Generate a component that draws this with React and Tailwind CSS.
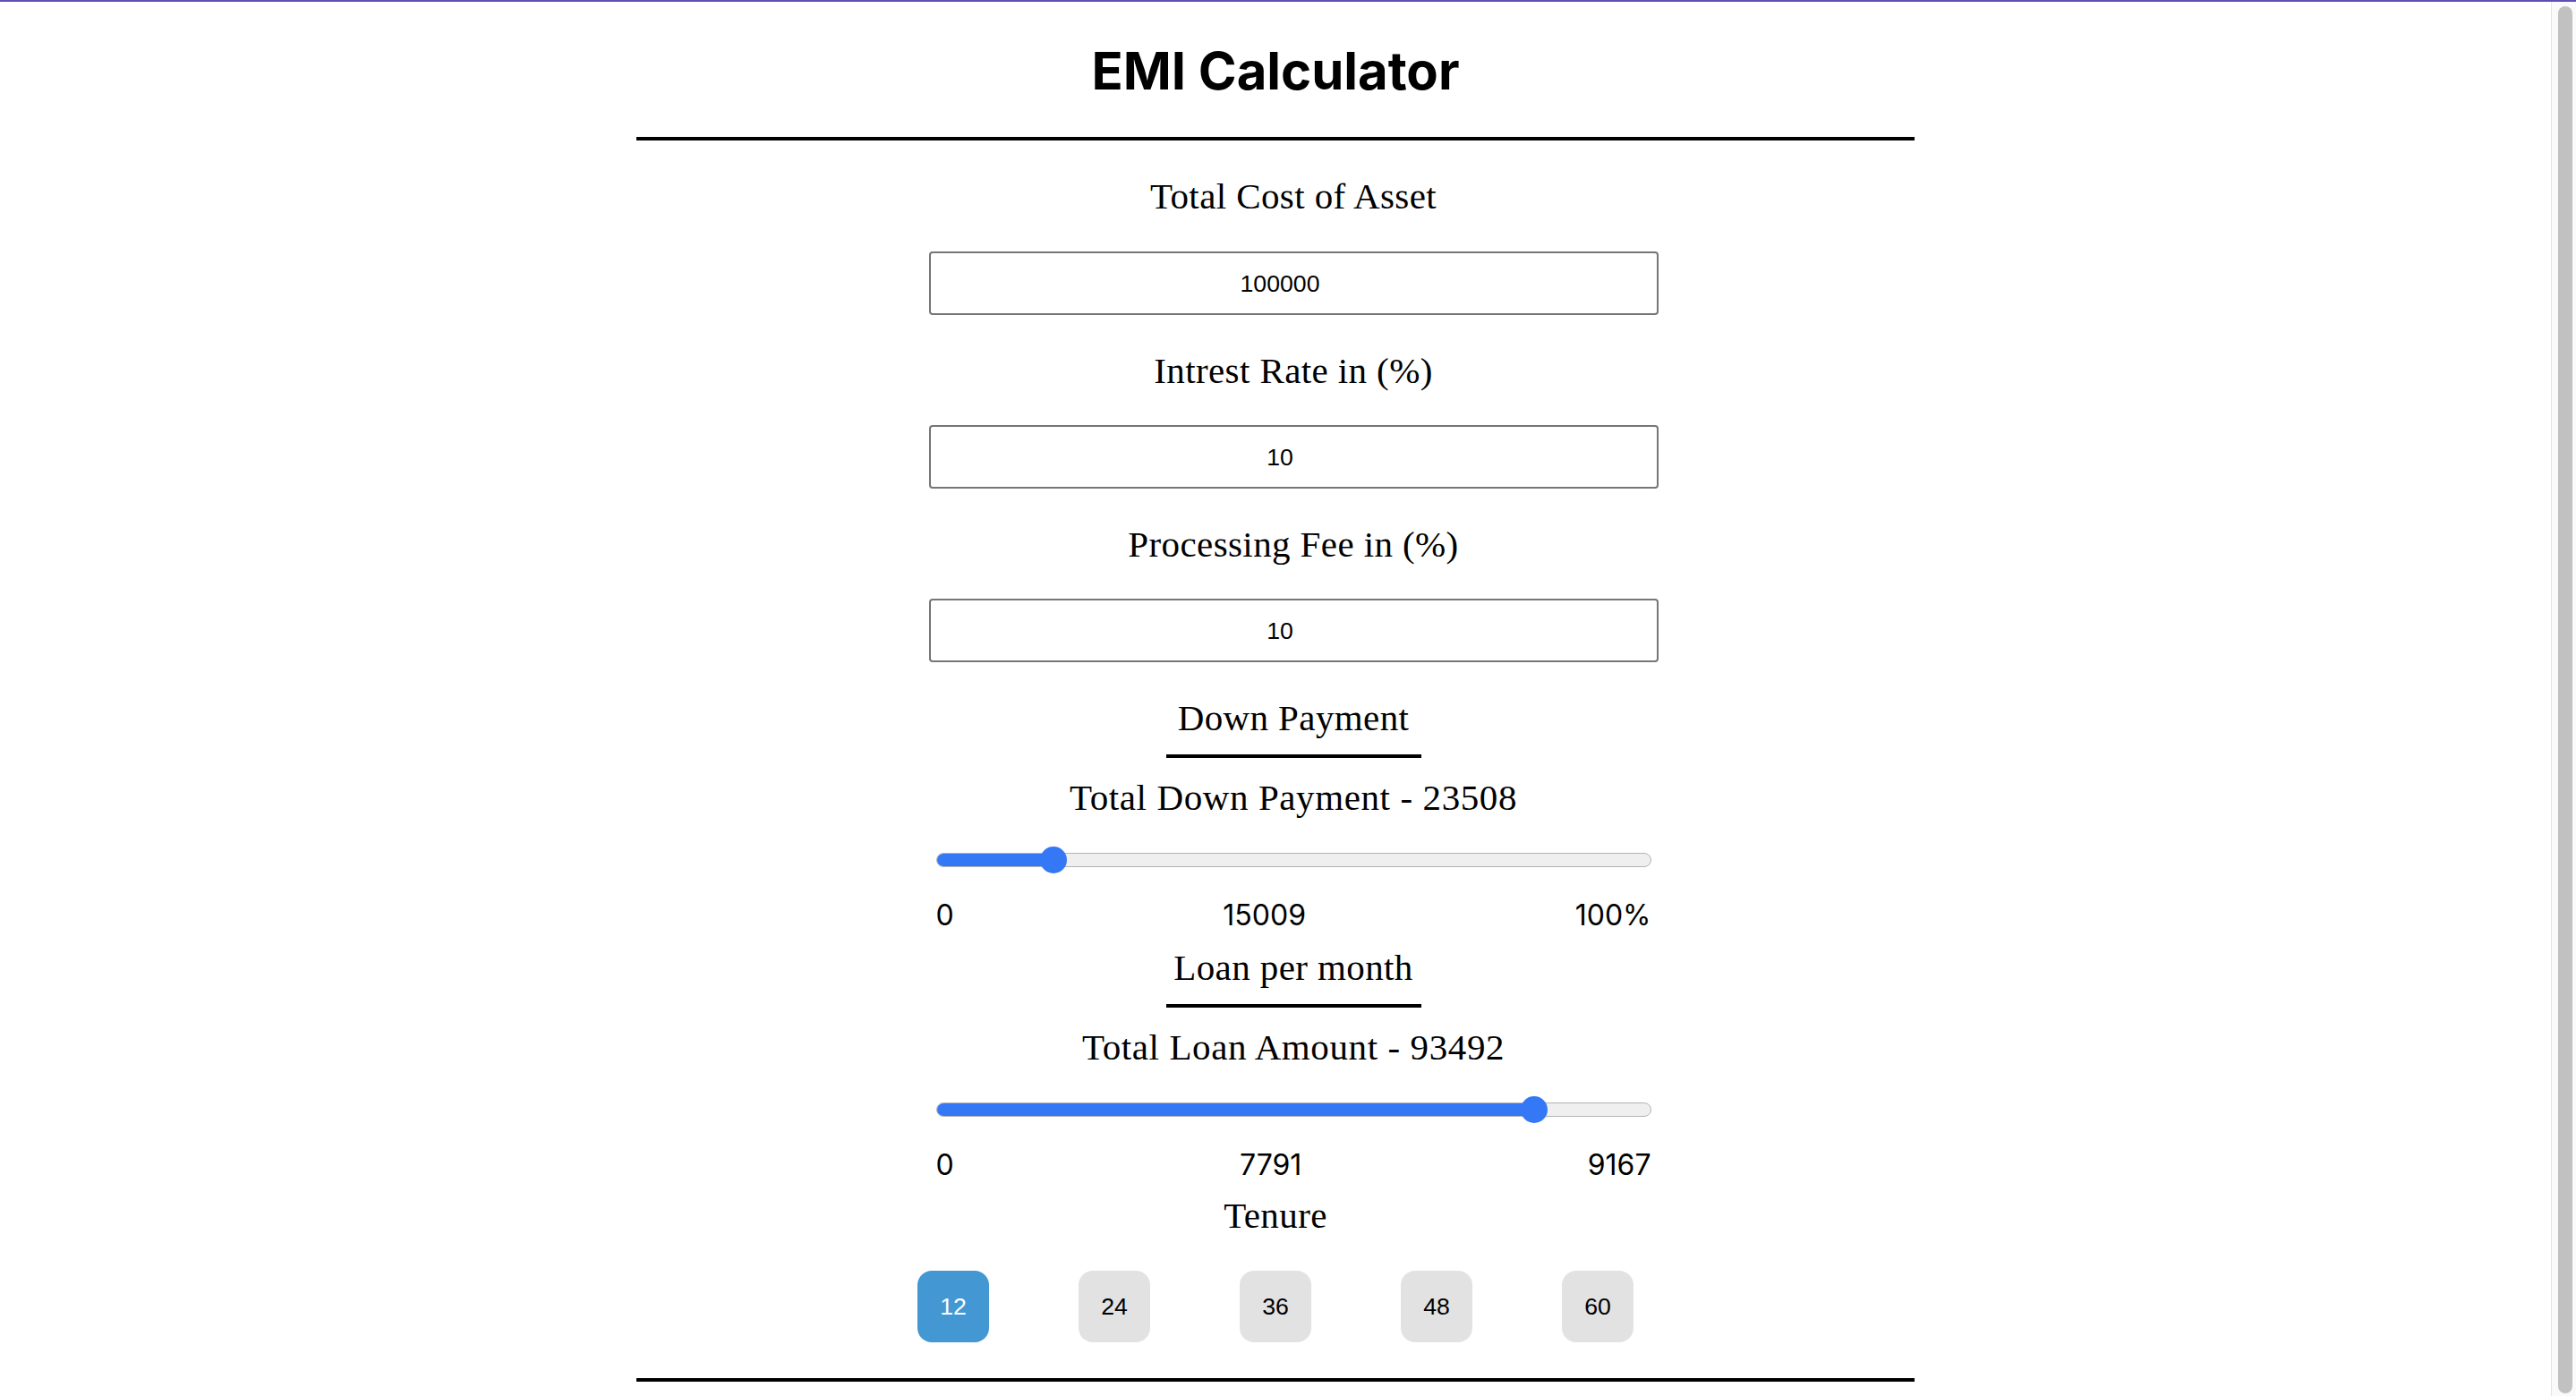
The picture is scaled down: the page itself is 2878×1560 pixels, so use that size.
import React from "react";

const fields = [
  { label: "Total Cost of Asset", value: "100000" },
  { label: "Intrest Rate in (%)", value: "10" },
  { label: "Processing Fee in (%)", value: "10" },
];

const sliders = [
  {
    title: "Down Payment",
    total: "Total Down Payment - 23508",
    pct: 16.4,
    marks: ["0", "15009", "100%"],
  },
  {
    title: "Loan per month",
    total: "Total Loan Amount - 93492",
    pct: 83.7,
    marks: ["0", "7791", "9167"],
  },
];

const tenures = [12, 24, 36, 48, 60];

function Field({ label, value, first }) {
  return (
    <div>
      <div className="mt-[42px] h-[40px] text-center text-[41px] leading-[40px] tracking-[0.4px] text-black font-['Liberation_Serif',serif]">
        {label}
      </div>
      <div
        className={
          first
            ? "mt-[42px] mx-auto w-[815px] h-[71px] rounded-[4px] border-2 border-[#767676] pr-[30px] flex items-center justify-center text-[26.67px] text-black font-['Liberation_Sans',Arial,sans-serif]"
            : "mt-[41px] mx-auto w-[815px] h-[71px] rounded-[4px] border-2 border-[#767676] pr-[30px] flex items-center justify-center text-[26.67px] text-black font-['Liberation_Sans',Arial,sans-serif]"
        }
      >
        {value}
      </div>
    </div>
  );
}

function Range({ pct }) {
  return (
    <div className="relative mx-auto w-[799px] h-[30px] flex items-center">
      <div className="w-full h-[16px] rounded-full bg-[#efefef] border border-[#b3b3b3] overflow-hidden">
        <div className="h-full bg-[#3478f6]" style={{ width: `${pct}%` }} />
      </div>
      {/* thumb */}
      <div
        className="absolute top-0 w-[30px] h-[30px] -ml-[15px] rounded-full bg-[#3478f6]"
        style={{ left: `${pct}%` }}
      />
    </div>
  );
}

function SliderBlock({ title, total, pct, marks, first }) {
  return (
    <div className={first ? "mt-[42px]" : "mt-[22px]"}>
      <div className="h-[40px] text-center text-[41px] leading-[40px] tracking-[0.4px] text-black font-['Liberation_Serif',serif]">
        {title}
      </div>
      <div className="mt-[21px] mx-auto w-[285px] h-[4px] bg-black" />
      <div className="mt-[24px] h-[40px] text-center text-[41px] leading-[40px] tracking-[0.6px] text-black font-['Liberation_Serif',serif]">
        {total}
      </div>
      <div className="mt-[35px]">
        <Range pct={pct} />
      </div>
      <div className="mt-[31px] mx-auto w-[799px] h-[32px] flex justify-between text-[32px] leading-[32px] text-black font-['Inter',sans-serif]">
        {marks.map((m, i) => (
          <span key={i}>{m}</span>
        ))}
      </div>
    </div>
  );
}

export default function App() {
  return (
    <div className="h-[1560px] overflow-hidden bg-white flex flex-col">
      <div className="h-[2px] shrink-0 bg-[#5c50b4]" />
      <div className="flex flex-1 min-h-0">
        <main className="flex-1">
          <div className="w-[1428px] mx-auto">
            <h1 className="mt-[47px] h-[60px] text-center text-[58px] leading-[60px] font-bold text-black font-['Inter',sans-serif]">
              EMI Calculator
            </h1>
            <div className="mt-[44px] h-[4px] bg-black" />

            <div className="pl-[40px]">
              {fields.map((f, i) => (
                <Field key={f.label} {...f} first={i === 0} />
              ))}
              {sliders.map((s, i) => (
                <SliderBlock key={s.title} {...s} first={i === 0} />
              ))}
            </div>

            <div className="mt-[20px] h-[40px] text-center text-[41px] leading-[40px] tracking-[0.4px] text-black font-['Liberation_Serif',serif]">
              Tenure
            </div>
            <div className="mt-[42px] flex justify-center gap-[100px]">
              {tenures.map((t) => (
                <button
                  key={t}
                  className={
                    t === 12
                      ? "w-[80px] h-[80px] rounded-[16px] bg-[#4398d3] text-white text-[26.67px] font-['Liberation_Sans',Arial,sans-serif]"
                      : "w-[80px] h-[80px] rounded-[16px] bg-[#e2e2e2] text-black text-[26.67px] font-['Liberation_Sans',Arial,sans-serif]"
                  }
                >
                  {t}
                </button>
              ))}
            </div>
            <div className="mt-[40px] h-[4px] bg-black" />
          </div>
        </main>
        {/* browser scrollbar */}
        <div className="w-[28px] shrink-0 border-l border-[#e4e4e4] bg-[#fafafa] pt-[5px] pl-[7px] pr-[4px]">
          <div className="h-[1550px] rounded-full bg-[#c1c1c1]" />
        </div>
      </div>
    </div>
  );
}
